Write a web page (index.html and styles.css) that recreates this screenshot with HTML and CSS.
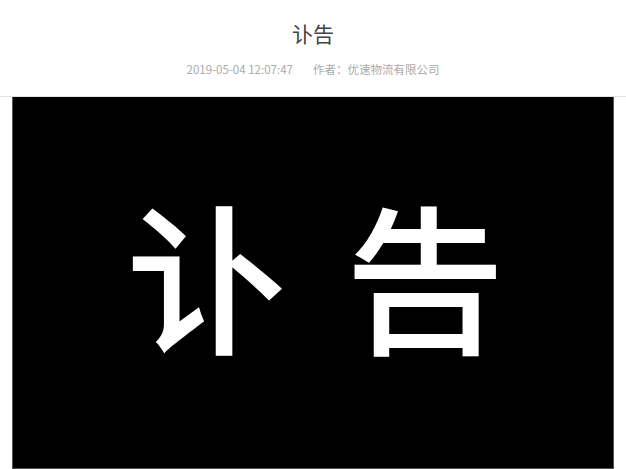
FILE: index.html
```html
<!DOCTYPE html>
<html lang="zh">
<head>
<meta charset="utf-8">
<link rel="stylesheet" href="styles.css">
</head>
<body>
<header class="header">
  <h1 class="title">讣告</h1>
  <div class="meta"><span class="date">2019-05-04 12:07:47</span><span class="author">作者：优速物流有限公司</span></div>
</header>
<main class="content">
  <div class="poster">
    <span class="big">讣</span><span class="big">告</span>
  </div>
</main>
</body>
</html>
```
FILE: styles.css
```css
html, body {
  margin: 0;
  padding: 0;
  background: #fff;
  font-family: "Noto Sans CJK SC", "Noto Sans", sans-serif;
}
.header {
  height: 97px;
  box-sizing: border-box;
  border-bottom: 1px solid #e2e2e2;
  text-align: center;
  padding-top: 18px;
}
.title {
  margin: 0;
  font-size: 21px;
  font-weight: 400;
  line-height: 30px;
  color: #444;
}
.meta {
  margin-top: 13px;
  font-size: 11.5px;
  line-height: 16px;
  color: #aaa;
  display: flex;
  justify-content: center;
  gap: 20px;
}
.content {
  padding: 0 12px;
}
.poster {
  background: #000;
  height: 372px;
  border: 1px solid #555;
  border-top: none;
  display: flex;
  justify-content: center;
  align-items: center;
  gap: 58px;
  padding-left: 6px;
  padding-bottom: 22px;
  box-sizing: border-box;
}
.big {
  color: #fff;
  font-size: 160px;
  line-height: 1;
  font-weight: 500;
}
```
